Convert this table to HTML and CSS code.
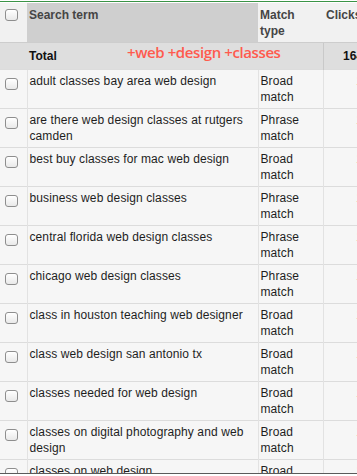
FILE: index.html
```html
<!DOCTYPE html>
<html lang="en">
<head>
<meta charset="utf-8">
<title>Search terms</title>
<link rel="stylesheet" href="styles.css">
</head>
<body>
<div class="frame">
  <table class="terms">
    <colgroup>
      <col class="c-check">
      <col class="c-term">
      <col class="c-match">
      <col class="c-clicks">
    </colgroup>
    <thead>
      <tr class="head">
        <th class="cell-check"><span class="box"></span></th>
        <th class="th-term">Search term</th>
        <th class="th-match">Match<br>type</th>
        <th class="th-clicks">Clicks</th>
      </tr>
      <tr class="total">
        <td class="cell-check"></td>
        <td class="total-label">Total<span class="query">+web +design +classes</span></td>
        <td></td>
        <td class="num">164</td>
      </tr>
    </thead>
    <tbody>
      <tr><td class="cell-check"><span class="box"></span></td><td>adult classes bay area web design</td><td>Broad<br>match</td><td class="num">1</td></tr>
      <tr><td class="cell-check"><span class="box"></span></td><td>are there web design classes at rutgers camden</td><td>Phrase<br>match</td><td class="num">1</td></tr>
      <tr><td class="cell-check"><span class="box"></span></td><td>best buy classes for mac web design</td><td>Broad<br>match</td><td class="num">1</td></tr>
      <tr><td class="cell-check"><span class="box"></span></td><td>business web design classes</td><td>Phrase<br>match</td><td class="num">1</td></tr>
      <tr><td class="cell-check"><span class="box"></span></td><td>central florida web design classes</td><td>Phrase<br>match</td><td class="num">1</td></tr>
      <tr><td class="cell-check"><span class="box"></span></td><td>chicago web design classes</td><td>Phrase<br>match</td><td class="num">1</td></tr>
      <tr><td class="cell-check"><span class="box"></span></td><td>class in houston teaching web designer</td><td>Broad<br>match</td><td class="num">1</td></tr>
      <tr><td class="cell-check"><span class="box"></span></td><td>class web design san antonio tx</td><td>Broad<br>match</td><td class="num">1</td></tr>
      <tr><td class="cell-check"><span class="box"></span></td><td>classes needed for web design</td><td>Broad<br>match</td><td class="num">1</td></tr>
      <tr><td class="cell-check"><span class="box"></span></td><td>classes on digital photography and web design</td><td>Broad<br>match</td><td class="num">1</td></tr>
      <tr><td class="cell-check"><span class="box"></span></td><td>classes on web design</td><td>Broad<br>match</td><td class="num">1</td></tr>
    </tbody>
  </table>
</div>
</body>
</html>
```

FILE: styles.css
```css
html, body {
  margin: 0;
  padding: 0;
  background: #ffffff;
}

.frame {
  width: 357px;
  height: 472px;
  overflow: hidden;
  border-top: 1px solid #ffffff;
  border-bottom: 1px solid #5a5a5a;
}

.frame::before {
  content: "";
  display: block;
  height: 1px;
  background: #3a9346;
}

.terms {
  border-collapse: collapse;
  table-layout: fixed;
  width: 370px;
  margin-top: 1px;
  font-family: "Liberation Sans", Arial, sans-serif;
  font-size: 12px;
  letter-spacing: 0.1px;
  line-height: 16px;
  color: #1e1e1e;
}

.c-check { width: 27px; }
.c-term { width: 231px; }
.c-match { width: 65px; }
.c-clicks { width: 47px; }

.terms th,
.terms td {
  text-align: left;
  vertical-align: top;
  padding: 3px 4px 3px 2px;
  border-left: 1px solid #e2e2e2;
}

.terms th:first-child,
.terms td:first-child {
  border-left: none;
}

/* header row */
.head th {
  height: 32px;
  padding-top: 4px;
  background: #f1f1f1;
  color: #454545;
  font-weight: bold;
  letter-spacing: 0;
  border-left: none;
}

.head .th-term {
  background: #cfcfcf;
}

.head .th-clicks {
  padding-left: 3px;
}

/* total row */
.total td {
  height: 20px;
  padding-top: 5px;
  padding-bottom: 1px;
  background: #dedede;
  font-weight: bold;
  letter-spacing: 0;
  color: #111111;
  border-top: 1px solid #cdcdcd;
  border-left: none;
}

.total td.num {
  border-left: 1px solid #c9c9c9;
}

.total-label {
  position: relative;
}

.query {
  position: absolute;
  left: 100px;
  top: 1px;
  font-family: "Open Sans", "Noto Sans", sans-serif;
  font-size: 15px;
  font-weight: 600;
  letter-spacing: -0.4px;
  color: #ff5a4e;
  white-space: nowrap;
}

/* body rows */
tbody td {
  height: 32px;
  background: #f6f6f6;
  border-top: 1px solid #dcdcdc;
  padding-top: 2px;
}

.terms .num {
  text-align: right;
  padding-right: 7px;
}

.cell-check {
  padding: 0;
}

.box {
  display: block;
  width: 11px;
  height: 10px;
  margin: 5px 0 0 3px;
  border: 1px solid #8e8e8e;
  border-radius: 3px;
  background: linear-gradient(#ffffff, #e9e9e9);
  box-shadow: inset 0 1px 0 #ffffff;
}

.head .box {
  margin-top: 2px;
}
```
